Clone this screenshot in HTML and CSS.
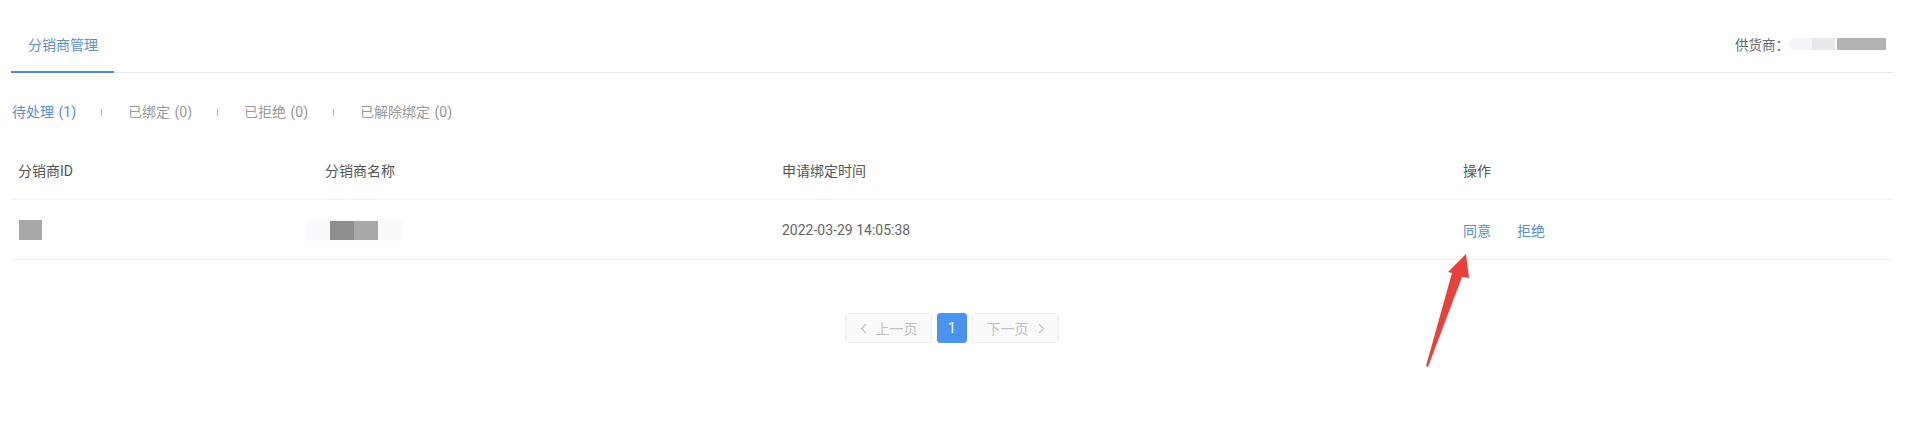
FILE: index.html
```html
<html>
<head>
	<meta charset="utf-8">
	<link rel="stylesheet" href="styles.css">
	<title>分销商管理</title>
</head>
<body>
	<div class="page">
		<div class="topbar">
			<div class="tab active">分销商管理</div>
			<div class="supplier">
				<span>供货商：</span>
				<span class="blur b1"></span><span class="blur b2"></span><span class="blur b3"></span>
			</div>
		</div>

		<div class="subtabs">
			<span class="sub active">待处理 (1)</span>
			<span class="sep"></span>
			<span class="sub">已绑定 (0)</span>
			<span class="sep"></span>
			<span class="sub">已拒绝 (0)</span>
			<span class="sep"></span>
			<span class="sub">已解除绑定 (0)</span>
		</div>

		<div class="table">
			<div class="row head">
				<div class="cell c1">分销商ID</div>
				<div class="cell c2">分销商名称</div>
				<div class="cell c3">申请绑定时间</div>
				<div class="cell c4">操作</div>
			</div>
			<div class="row">
				<div class="cell c1"><span class="mask id"></span></div>
				<div class="cell c2"><span class="namebox"><span class="mask n1"></span><span class="mask n2"></span></span></div>
				<div class="cell c3 date">2022-03-29 14:05:38</div>
				<div class="cell c4"><a class="act">同意</a><a class="act">拒绝</a></div>
			</div>
		</div>

		<div class="pager">
			<span class="pbtn wide disabled">
				<svg width="7" height="11" viewBox="0 0 7 11"><polyline points="6,1 1.5,5.5 6,10" fill="none" stroke="#c4c4c4" stroke-width="1.3"/></svg>
				上一页
			</span>
			<span class="pbtn current">1</span>
			<span class="pbtn wide disabled">
				下一页
				<svg width="7" height="11" viewBox="0 0 7 11"><polyline points="1,1 5.5,5.5 1,10" fill="none" stroke="#c4c4c4" stroke-width="1.3"/></svg>
			</span>
		</div>
	</div>

	<svg class="arrow" width="60" height="130" viewBox="1420 245 60 130">
		<polygon points="1466,254 1469,278 1462,277 1428,367 1426,366 1452,273 1448,272" fill="#e8413c"/>
	</svg>
</body>
</html>
```

FILE: styles.css
```css
body {
	margin: 0;
	font-family: Roboto, "Noto Sans CJK SC", sans-serif;
	font-size: 14px;
	color: #555;
	background: #fff;
}
.page {
	padding: 0 22px 0 11px;
}
.topbar {
	display: flex;
	justify-content: space-between;
	align-items: flex-end;
	height: 72px;
	border-bottom: 1px solid #e6e6e6;
}
.tab {
	line-height: 20px;
	padding: 0 16px 16px 17px;
	white-space: nowrap;
	color: #5b8fd6;
	border-bottom: 2px solid #4f88d3;
	margin-bottom: -1px;
}
.supplier {
	display: flex;
	align-items: center;
	height: 20px;
	margin-bottom: 18px;
	margin-right: 7px;
	color: #666;
	font-size: 13.5px;
	white-space: nowrap;
}
.blur {
	display: inline-block;
	height: 12px;
}
.b1 { width: 23px; background: #f2f4f9; border-radius: 6px 0 0 6px; }
.b2 { width: 23px; background: #e8e8ea; margin-right: 2px; }
.b3 { width: 49px; background: #b3b3b3; }

.subtabs {
	display: flex;
	align-items: center;
	margin-top: 29px;
	line-height: 20px;
	padding-left: 1px;
	word-spacing: 1px;
}
.sub {
	color: #9a9a9a;
	white-space: nowrap;
}
.sub.active {
	color: #5b8fd6;
}
.sep {
	width: 1px;
	height: 7px;
	background: #bbb;
	margin: 0 26px 0 25px;
}

.table {
	margin-top: 19px;
}
.row {
	display: flex;
	align-items: center;
	height: 59px;
	border-bottom: 1px solid #f0f0f0;
}
.row.head {
	height: 58px;
	color: #555;
}
.cell {
	padding-left: 7px;
	box-sizing: border-box;
}
.c1 { width: 307px; }
.c2 { width: 457px; }
.c3 { width: 681px; }
.c4 { flex: 1; }
.date {
	color: #666;
}
.mask {
	display: inline-block;
	height: 19px;
	vertical-align: middle;
}
.mask.id {
	width: 23px;
	height: 20px;
	margin-left: 1px;
	background: #a8a8a8;
}
.namebox {
	display: inline-flex;
	align-items: center;
	background: #fafafc;
	padding: 2px 24px 1px 23px;
	margin-left: -18px;
}
.mask.n1 { width: 24px; background: #8e8e8e; }
.mask.n2 { width: 24px; background: #a8a8a8; }
.act {
	color: #5b8fd6;
	margin-right: 26px;
	cursor: pointer;
}

.pager {
	display: flex;
	justify-content: center;
	gap: 5px;
	margin-top: 53px;
}
.pbtn {
	display: inline-flex;
	align-items: center;
	justify-content: center;
	gap: 9px;
	height: 30px;
	box-sizing: border-box;
	border: 1px solid #eee;
	border-radius: 3px;
	font-size: 14px;
	color: #c0c0c0;
	background: #fafafa;
}
.pbtn.wide {
	width: 87px;
}
.pbtn.current {
	width: 30px;
	color: #fff;
	background: #4a93ee;
	border-color: #4a93ee;
}
.arrow {
	position: absolute;
	left: 1420px;
	top: 245px;
}
```
